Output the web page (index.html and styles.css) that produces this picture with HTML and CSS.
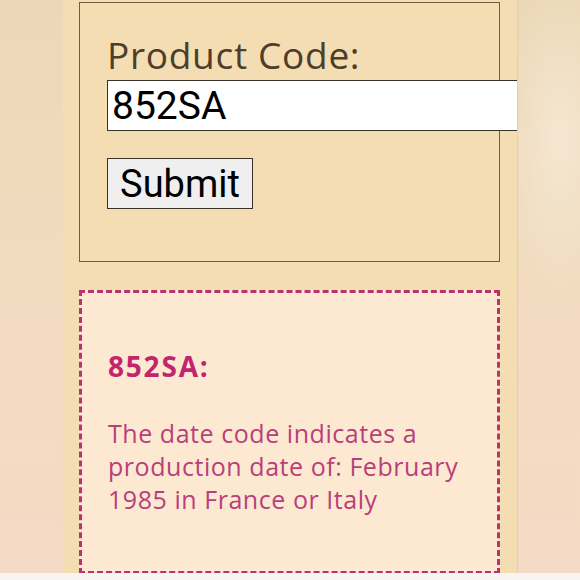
FILE: index.html
```html
<!DOCTYPE html>
<html>
<head>
<meta charset="utf-8">
<link rel="stylesheet" href="styles.css">
</head>
<body>
<div class="stage">
  <main class="column">
    <form class="lookup">
      <label class="label" for="code">Product Code:</label>
      <input class="field" id="code" type="text" value="852SA">
      <button class="submit" type="button">Submit</button>
    </form>
    <section class="result">
      <h2 class="result-title">852SA:</h2>
      <p class="result-text">The date code indicates a production date of: February 1985 in France or Italy</p>
    </section>
  </main>
</div>
</body>
</html>
```

FILE: styles.css
```css
html, body {
  margin: 0;
  padding: 0;
  background: #f7f5f2;
}
.stage {
  height: 573px;
  overflow: hidden;
  background:
    radial-gradient(ellipse 60px 160px at 560px 140px, rgba(245,232,212,0.9), rgba(245,232,212,0) 100%),
    linear-gradient(180deg, #ecd8b6 0%, #f1dbbf 45%, #f5dac5 100%);
}
.column {
  margin-left: 63px;
  width: 455px;
  height: 573px;
  background: #f4ddb3;
  border-right: 1px solid #e6cfa6;
  overflow: hidden;
  box-sizing: border-box;
  padding-top: 2px;
}
.lookup {
  margin-left: 16px;
  width: 421px;
  height: 260px;
  box-sizing: border-box;
  border: 1px solid #6d5b42;
  padding: 28px 0 0 27px;
  display: flex;
  flex-direction: column;
  align-items: flex-start;
}
.label {
  font-family: "Open Sans", "Lato", sans-serif;
  font-size: 37px;
  letter-spacing: 0.7px;
  line-height: 48px;
  color: #4d3d2a;
}
.field {
  margin-top: 1px;
  width: 440px;
  height: 51px;
  box-sizing: border-box;
  border: 1px solid #3a3228;
  background: #fff;
  font-family: "Roboto", sans-serif;
  font-size: 39px;
  color: #000;
  padding: 0 0 0 4px;
  outline: none;
}
.submit {
  margin-top: 27px;
  height: 51px;
  width: 146px;
  box-sizing: border-box;
  border: 1px solid #3a3228;
  background: #efefef;
  font-family: "Roboto", sans-serif;
  font-size: 38px;
  color: #000;
  padding: 0;
  border-radius: 0;
}
.result {
  margin: 28px 0 0 16px;
  width: 421px;
  height: 284px;
  box-sizing: border-box;
  border: 3px dashed #b9336f;
  background: #fde9d1;
  padding: 55px 20px 0 26px;
}
.result-title {
  margin: 0;
  font-family: "Open Sans", "Lato", sans-serif;
  font-weight: 700;
  font-size: 28px;
  letter-spacing: 1.8px;
  line-height: 36px;
  color: #c1256d;
}
.result-text {
  margin: 33px 0 0 0;
  font-family: "Open Sans", "Lato", sans-serif;
  font-size: 25px;
  letter-spacing: 0.55px;
  line-height: 33px;
  color: #b8407a;
}
```
